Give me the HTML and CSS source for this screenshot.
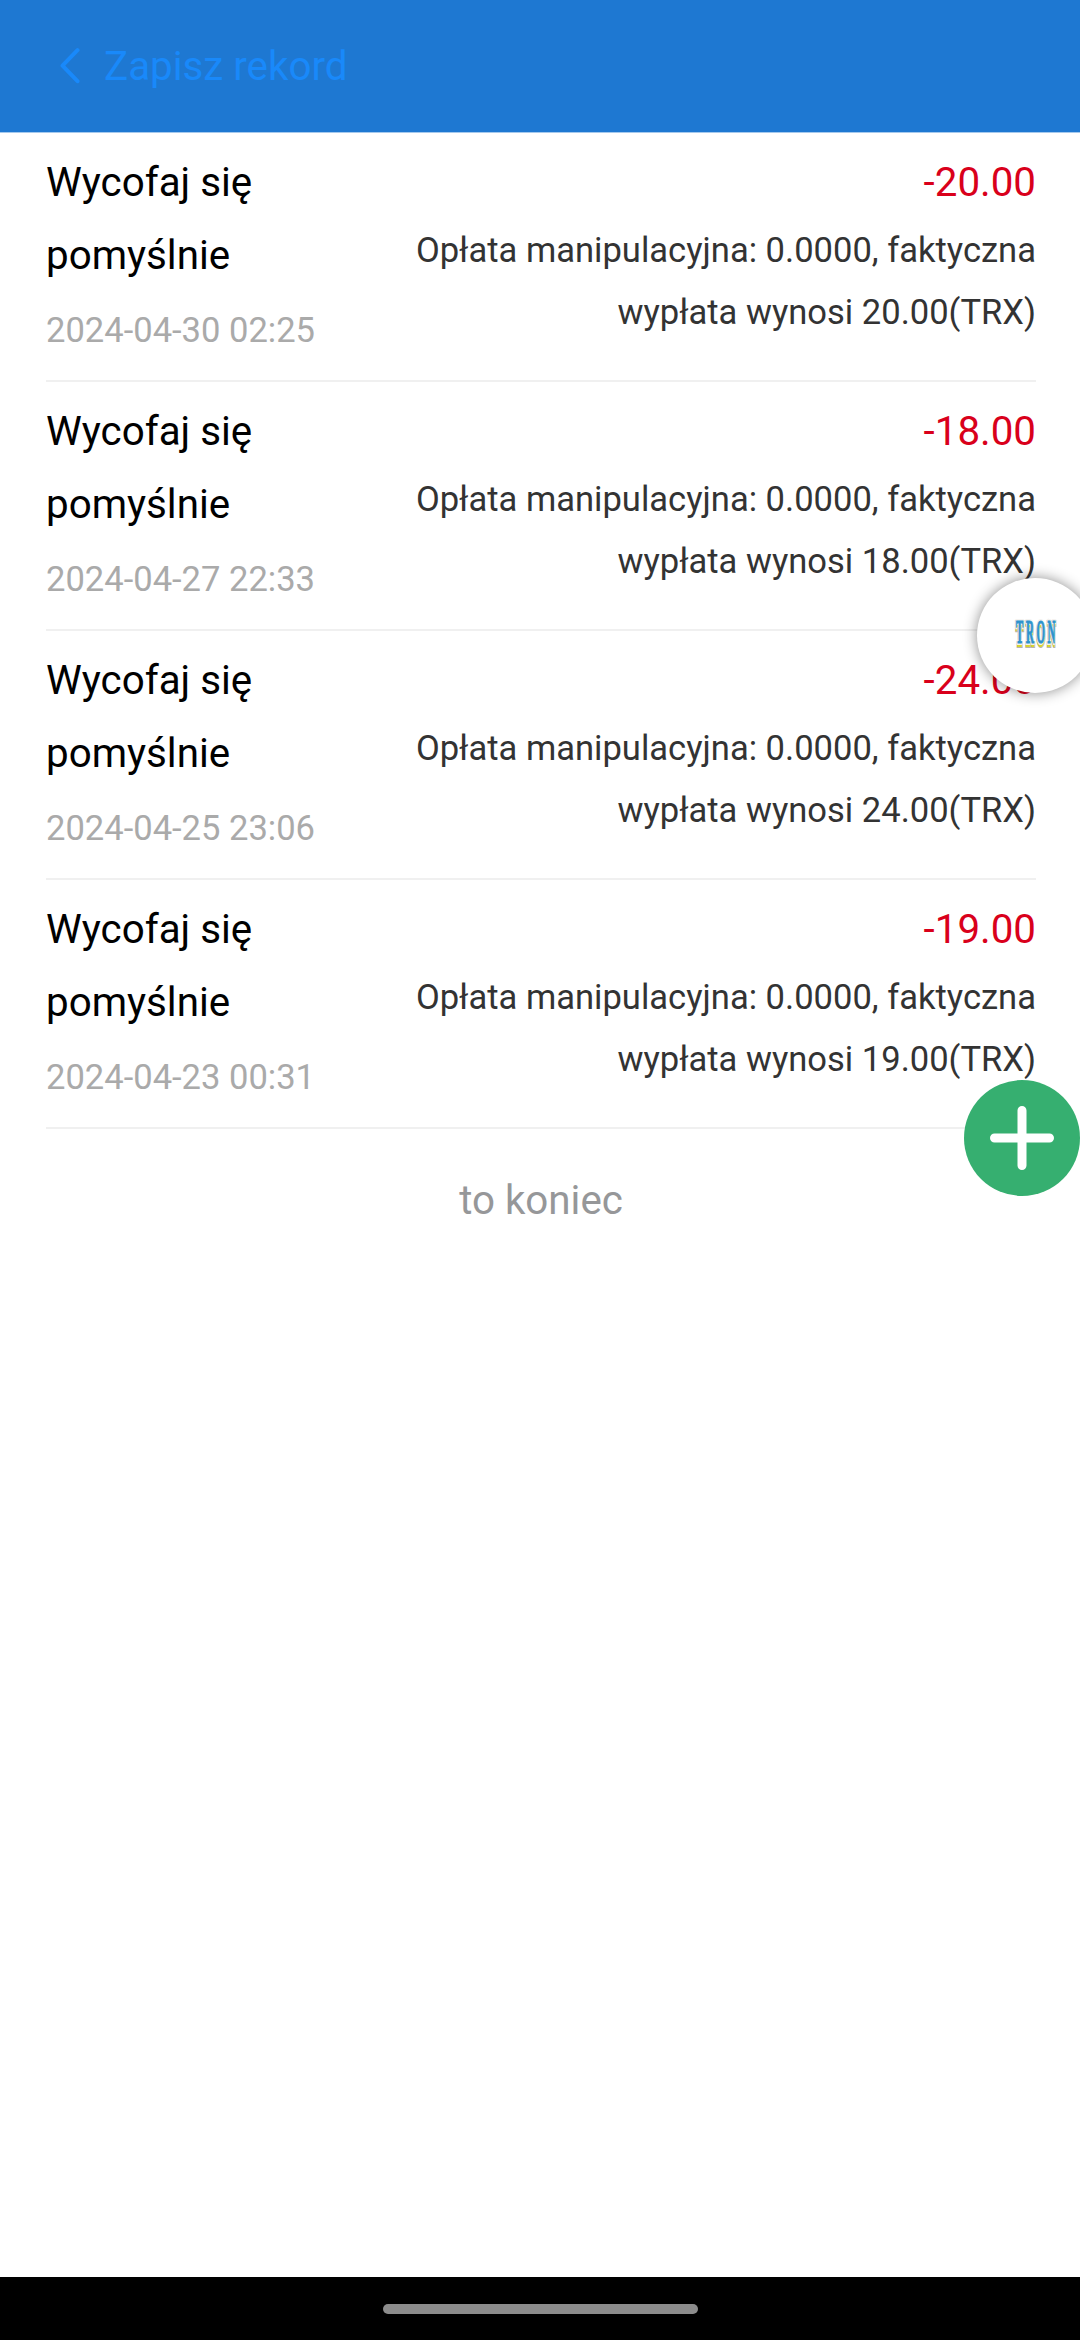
FILE: index.html
```html
<!DOCTYPE html>
<html lang="pl">
<head>
<meta charset="utf-8">
<title>Zapisz rekord</title>
<link rel="stylesheet" href="styles.css">
</head>
<body>
<header class="header">
  <svg class="back" viewBox="0 0 20 36"><path d="M17.5 2.2 2.5 17.7 17.5 33.2"/></svg>
  <h1 class="heading">Zapisz rekord</h1>
</header>
<main class="records">
  <section class="record">
    <div class="left"><p class="name">Wycofaj się pomyślnie</p><p class="date">2024-04-30 02:25</p></div>
    <div class="right"><p class="amount">-20.00</p><p class="detail">Opłata manipulacyjna: 0.0000, faktyczna wypłata wynosi 20.00(TRX)</p></div>
  </section>
  <section class="record">
    <div class="left"><p class="name">Wycofaj się pomyślnie</p><p class="date">2024-04-27 22:33</p></div>
    <div class="right"><p class="amount">-18.00</p><p class="detail">Opłata manipulacyjna: 0.0000, faktyczna wypłata wynosi 18.00(TRX)</p></div>
  </section>
  <section class="record">
    <div class="left"><p class="name">Wycofaj się pomyślnie</p><p class="date">2024-04-25 23:06</p></div>
    <div class="right"><p class="amount">-24.00</p><p class="detail">Opłata manipulacyjna: 0.0000, faktyczna wypłata wynosi 24.00(TRX)</p></div>
  </section>
  <section class="record">
    <div class="left"><p class="name">Wycofaj się pomyślnie</p><p class="date">2024-04-23 00:31</p></div>
    <div class="right"><p class="amount">-19.00</p><p class="detail">Opłata manipulacyjna: 0.0000, faktyczna wypłata wynosi 19.00(TRX)</p></div>
  </section>
  <p class="end">to koniec</p>
</main>
<footer class="navbar"><div class="handle"></div></footer>
<div class="bubble">
  <svg class="logo" viewBox="0 0 64 64">
    <g transform="translate(12 41) scale(.33 1)">
      <text class="logo-outline" y="1.5">TRON</text>
      <text class="logo-shade" y="3">TRON</text>
      <text class="logo-halo">TRON</text>
      <text class="logo-face">TRON</text>
    </g>
  </svg>
</div>
<div class="add"><svg class="plus" viewBox="0 0 64 64"><path d="M32 4.5v55M4.5 32h55"/></svg></div>
</body>
</html>
```
FILE: styles.css
```css
* { box-sizing: border-box; }
body {
  margin: 0;
  height: 2340px;
  display: flex;
  flex-direction: column;
  overflow: hidden;
  background: #fff;
  color: #000;
  font-family: Roboto, sans-serif;
  font-size: 40.32px;
  line-height: 1.8;
}
p, h1 { margin: 0; font: inherit; }
.header {
  height: 132px;
  flex: none;
  display: flex;
  align-items: center;
  gap: 24px;
  padding-left: 60px;
  background: #1e78d2;
  color: #1989fa;
}
.heading { padding-top: 2px; }
.back { width: 20px; height: 36px; fill: none; stroke: #1989fa; stroke-width: 4; stroke-linecap: round; stroke-linejoin: round; }
.records { flex: 1; padding: 0 44px 0 46px; border-top: 1px solid #a5c9ed; }
.record {
  height: 249px;
  display: flex;
  justify-content: space-between;
  padding-top: 14px;
  border-bottom: 2px solid #f0f0f0;
}
.left { width: 30%; }
.right { width: 68%; text-align: right; }
.date { margin-top: 6.5px; font-size: 34.56px; color: #aaa; white-space: nowrap; }
.amount { color: #d9001b; }
.detail { margin-top: -1px; font-size: 34.56px; color: #333; }
.end { padding-top: 36px; text-align: center; color: #969799; }
.navbar { height: 63px; flex: none; background: #000; display: flex; justify-content: center; padding-top: 27px; }
.handle { width: 315px; height: 10px; border-radius: 5px; background: #8c8c8c; }
.bubble {
  position: absolute;
  left: 977px;
  top: 578px;
  width: 116px;
  height: 115px;
  border-radius: 50%;
  background: #fff;
  box-shadow: 0 0 14px rgba(0, 0, 0, .45);
}
.logo { position: absolute; left: 27px; top: 24px; width: 64px; height: 64px; }
.logo text { font-family: "Liberation Serif", serif; font-weight: bold; font-size: 33px; letter-spacing: 8px; }
.logo-outline { fill: #b9b3b0; stroke: #b9b3b0; stroke-width: 6; }
.logo-shade { fill: #d8d62f; stroke: #d8d62f; stroke-width: 2; }
.logo-halo { fill: #f4f2ef; stroke: #f4f2ef; stroke-width: 4; }
.logo-face { fill: #2d93cd; stroke: #2d93cd; stroke-width: 1.2; }
.add {
  position: absolute;
  left: 964px;
  top: 1080px;
  width: 116px;
  height: 116px;
  border-radius: 50%;
  background: #36af70;
  display: flex;
  align-items: center;
  justify-content: center;
}
.plus { width: 64px; height: 64px; fill: none; stroke: #fff; stroke-width: 9; stroke-linecap: round; }
```
